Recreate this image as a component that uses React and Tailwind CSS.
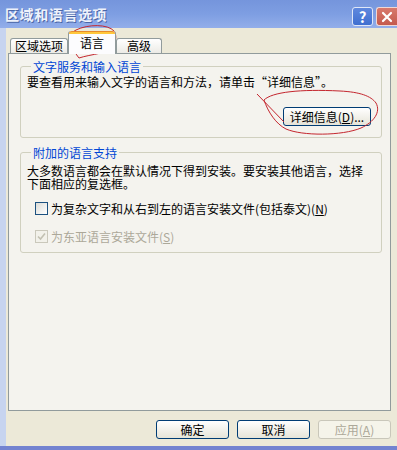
import React from "react";

const font = "font-['Noto_Sans_CJK_SC',sans-serif]";

function XpButton({ children, disabled }) {
  return (
    <button
      className={
        "w-[73px] h-[19px] rounded-[3px] border text-[12px] leading-none flex items-center justify-center " +
        (disabled
          ? "border-[#c9c7ba] bg-[#f5f4ea] text-[#aca899]"
          : "border-[#003c74] bg-gradient-to-b from-[#ffffff] to-[#e6e4d8] text-black")
      }
    >
      {children}
    </button>
  );
}

function Tab({ label, active }) {
  if (active) {
    return (
      <div className="relative z-10 w-[48px] h-[23px] -mb-[1px] border-x border-[#919b9c] rounded-t-[3px] bg-[#fcfcfe] flex flex-col">
        <div className="h-[3px] rounded-t-[3px] bg-[#ffc83c] border-t border-[#e68b2c]" />
        <div className="flex-1 flex items-center justify-center text-[12px] leading-none text-black pb-[2px]">
          {label}
        </div>
      </div>
    );
  }
  return (
    <div className="h-[15px] border-t border-x border-[#919b9c] rounded-t-[3px] bg-gradient-to-b from-[#ffffff] to-[#ecebe6] flex items-center justify-center text-[12px] leading-none text-black">
      {label}
    </div>
  );
}

function Group({ title, children, className }) {
  return (
    <fieldset className={"border border-[#d0d0bf] rounded-[3px] pl-[6px] pr-[10px] " + className}>
      <legend className="ml-[4px] px-[2px] text-[12px] leading-[13px] text-[#0046d5]">{title}</legend>
      {children}
    </fieldset>
  );
}

export default function App() {
  return (
    <div className={"relative w-[397px] h-[450px] overflow-hidden bg-[#ece9d8] flex flex-col " + font}>
      {/* title bar */}
      <div className="h-[28px] bg-gradient-to-b from-[#7595dc] via-[#7e9ee2] to-[#93aeea] flex items-center pl-[5px]">
        <div className="flex-1 text-[14px] font-bold tracking-[0.6px] text-[#eef2fb] [text-shadow:1px_1px_0_#4a66a8] pt-[1px]">
          区域和语言选项
        </div>
        <div className="flex gap-[3px] self-start mt-[7px]">
          <div className="w-[21px] h-[19px] rounded-[3px] border border-[#dfe7f8] bg-gradient-to-b from-[#5f88de] to-[#3f6fd0] flex items-center justify-center text-white text-[15px] font-bold leading-none">
            ?
          </div>
          <div className="w-[21px] h-[19px] rounded-l-[3px] border border-r-0 border-[#f0d8d4] bg-gradient-to-b from-[#d8796c] to-[#c45a4d] flex items-center justify-center">
            <svg width="12" height="12" viewBox="0 0 12 12">
              <path d="M2 2 L10 10 M10 2 L2 10" stroke="#ffffff" strokeWidth="2.2" strokeLinecap="round" />
            </svg>
          </div>
        </div>
      </div>

      <div className="flex-1 flex">
        <div className="w-[6px] bg-[#c7d4ef]" />
        <div className="flex-1 flex flex-col pl-[2px] pr-[6px]">
          {/* tabs */}
          <div className="h-[25px] flex items-end pl-[2px]">
            <div className="w-[58px]">
              <Tab label="区域选项" />
            </div>
            <Tab label="语言" active />
            <div className="w-[46px]">
              <Tab label="高级" />
            </div>
          </div>

          {/* panel */}
          <div className="h-[358px] border border-[#919b9c] bg-[#f4f3ee] pt-[6px] pl-[11px] pr-[8px] flex flex-col">
            <Group title="文字服务和输入语言" className="h-[78px] pb-[11px]">
              <div className="mt-[2px] text-[12px] leading-[14px] text-black whitespace-nowrap">
                要查看用来输入文字的语言和方法，请单击“详细信息”。
              </div>
              <div className="flex justify-end mt-[18px]">
                <button className="w-[88px] h-[19px] rounded-[3px] border border-[#003c74] bg-gradient-to-b from-[#ffffff] to-[#e6e4d8] text-[12px] leading-none text-black flex items-center justify-center">
                  详细信息(<u>D</u>)...
                </button>
              </div>
            </Group>

            <Group title="附加的语言支持" className="mt-[8px] h-[107px]">
              <div className="mt-[5px] text-[12px] leading-[13px] text-black">
                大多数语言都会在默认情况下得到安装。要安装其他语言，选择
                <br />
                下面相应的复选框。
              </div>
              <div className="mt-[12px] pl-[8px] flex items-center gap-[3px] text-[12px] leading-none text-black">
                <div className="w-[13px] h-[13px] border border-[#1c5180] bg-gradient-to-br from-[#dcdcd7] to-[#ffffff]" />
                <span>
                  为复杂文字和从右到左的语言安装文件(包括泰文)(<u>N</u>)
                </span>
              </div>
              <div className="mt-[15px] pl-[8px] flex items-center gap-[3px] text-[12px] leading-none text-[#aca899]">
                <div className="w-[13px] h-[13px] border border-[#cac8bb] bg-[#f2f1ea] flex items-center justify-center">
                  <svg width="9" height="9" viewBox="0 0 9 9">
                    <path d="M1 4.5 L3.5 7 L8 1.5" stroke="#c2c0b2" strokeWidth="1.6" fill="none" />
                  </svg>
                </div>
                <span>
                  为东亚语言安装文件(<u>S</u>)
                </span>
              </div>
            </Group>
          </div>

          {/* buttons */}
          <div className="flex justify-end gap-[8px] pt-[9px]">
            <XpButton>确定</XpButton>
            <XpButton>取消</XpButton>
            <XpButton disabled>
              应用(<u>A</u>)
            </XpButton>
          </div>
        </div>
      </div>
      <div className="h-[4px] bg-[#7383d0]" />

      {/* hand-drawn red marks */}
      <svg className="absolute inset-0 pointer-events-none" width="397" height="450" viewBox="0 0 397 450">
        <path
          d="M79 58 C71 48 66 35 76 30 C88 24 108 24 114 31 C119 39 113 50 101 53 C92 55 85 56 79 58"
          stroke="#c4262e"
          strokeWidth="1"
          fill="none"
        />
        <path
          d="M257 94 L284 122 M264 100 C272 92 300 89 340 91 C360 92 371 96 376 103 C381 112 374 122 361 128 C342 136 302 136 286 129 C276 124 268 112 264 100"
          stroke="#c4262e"
          strokeWidth="1"
          fill="none"
        />
      </svg>
    </div>
  );
}
